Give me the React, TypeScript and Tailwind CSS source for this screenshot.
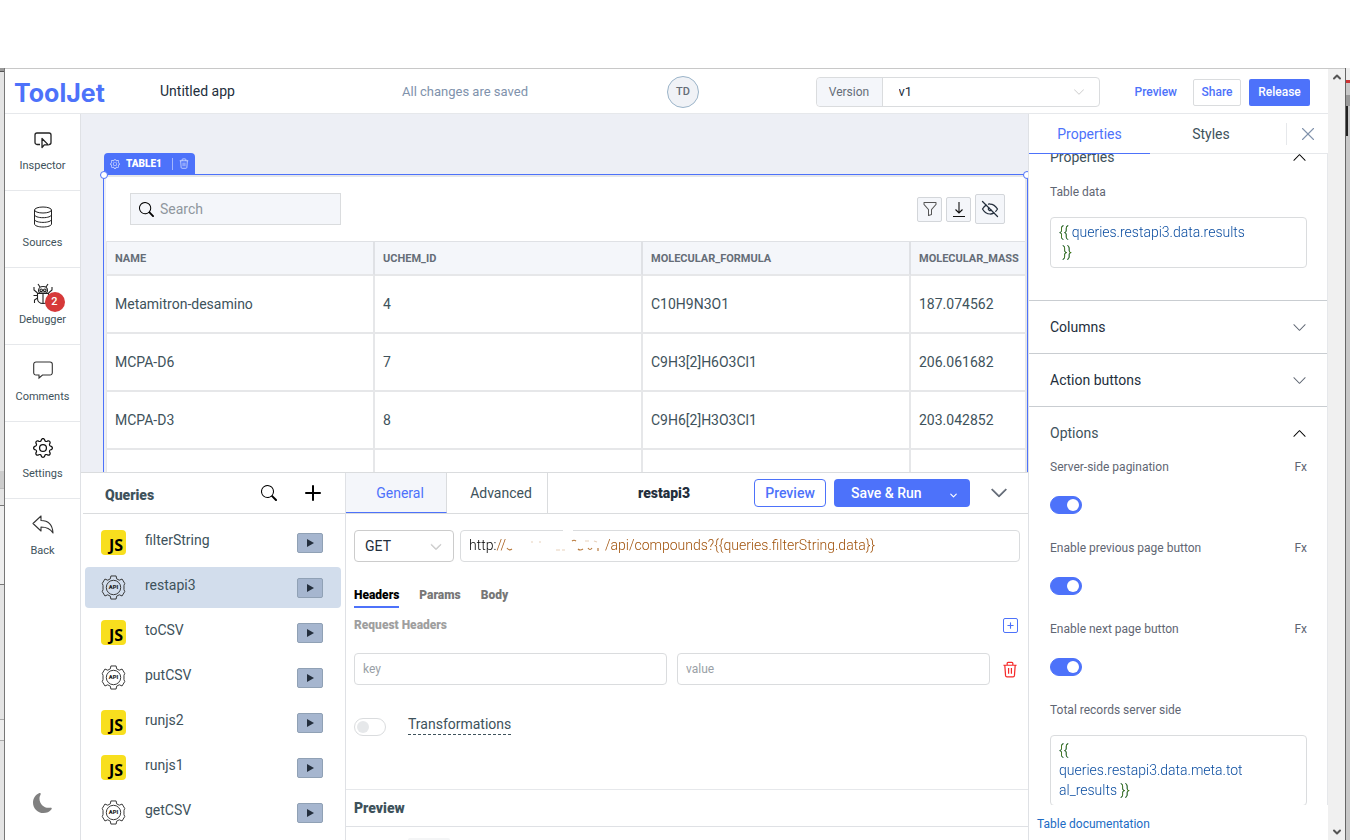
import type { ReactNode } from "react";
import { ChevronDown, ChevronUp, Plus, X } from "lucide-react";
import { BsChevronDown, BsChevronUp, BsFunnel, BsGear, BsMoonFill, BsSearch } from "react-icons/bs";
import { TbEyeOff } from "react-icons/tb";

const URL_VALUE = "http://" + "\u00a0".repeat(29) + "/api/compounds?{{queries.filterString.data}}";

const queries = [
  { name: "filterString", kind: "js" },
  { name: "restapi3", kind: "api" },
  { name: "toCSV", kind: "js" },
  { name: "putCSV", kind: "api" },
  { name: "runjs2", kind: "js" },
  { name: "runjs1", kind: "js" },
  { name: "getCSV", kind: "api" },
];

const columns = ["NAME", "UCHEM_ID", "MOLECULAR_FORMULA", "MOLECULAR_MASS"];

const rows = [
  ["Metamitron-desamino", "4", "C10H9N3O1", "187.074562"],
  ["MCPA-D6", "7", "C9H3[2]H6O3Cl1", "206.061682"],
  ["MCPA-D3", "8", "C9H6[2]H3O3Cl1", "203.042852"],
  ["", "", "", ""],
];

function InspectorIcon() {
  return (
    <svg width="20" height="20" viewBox="0 0 20 20" fill="none" stroke="#222" strokeWidth="1.3">
      <path d="M7 14.5H4A2 2 0 0 1 2 12.5V5a2 2 0 0 1 2-2h12a2 2 0 0 1 2 2v7.500a2 2 0 0 1-2 2" />
      <path d="M9 8.500v9l2.300-2.600h4z" strokeLinejoin="round" />
    </svg>
  );
}

function DatabaseIcon() {
  return (
    <svg width="20" height="22" viewBox="0 0 20 22" fill="none" stroke="#222" strokeWidth="1">
      <ellipse cx="10" cy="4" rx="8.500" ry="3" />
      <path d="M1.500 4v14c0 1.700 3.800 3 8.500 3s8.500-1.300 8.500-3V4" />
      <path d="M1.500 8.700c0 1.700 3.800 3 8.500 3s8.500-1.300 8.500-3M1.500 13.400c0 1.700 3.800 3 8.500 3s8.500-1.300 8.500-3" />
    </svg>
  );
}

function BugIcon() {
  return (
    <svg width="20" height="22" viewBox="0 0 20 22" fill="none" stroke="#222" strokeWidth="1.100">
      <path d="M5 1l2 3M15 1l-2 3M5.500 7.500C5.500 5 7.500 3.500 10 3.500s4.500 1.500 4.500 4c0 1-.5 2-1 2.500h-7c-.5-.5-1-1.500-1-2.500z" />
      <circle cx="8.200" cy="7.300" r="1.300" />
      <circle cx="11.800" cy="7.300" r="1.300" />
      <path d="M4.500 10.500h11v5c0 3-2.300 5-5.500 5s-5.500-2-5.500-5zM10 10.500v10" />
      <path d="M1 4v3l3.500 3M19 4v3l-3.500 3M.5 12.500h4M15.500 12.500h4M1.500 20v-3l3-2M18.500 20v-3l-3-2" />
    </svg>
  );
}

function CommentIcon() {
  return (
    <svg width="20" height="20" viewBox="0 0 20 20" fill="none" stroke="#333" strokeWidth="1.100">
      <path d="M3 1h14a2.300 2.300 0 0 1 2.300 2.300v8.400A2.300 2.300 0 0 1 17 14H9.500L6 17v-3H3A2.300 2.300 0 0 1 .7 11.700V3.300A2.300 2.300 0 0 1 3 1z" />
    </svg>
  );
}

function BackIcon() {
  return (
    <svg width="22" height="20" viewBox="0 0 22 20" fill="none" stroke="#333" strokeWidth="1.100" strokeLinejoin="round">
      <path d="M1 8.500L9 1v4.500c7 0 11.500 4.500 12 12.500-2.500-4-6-6-12-6v4z" />
    </svg>
  );
}

function TrashIcon({ className }: { className?: string }) {
  return (
    <svg className={className} viewBox="0 0 16 18" fill="none" stroke="currentColor" strokeWidth="1.300">
      <path d="M1 4.500h14M5 4.500V2.500A1 1 0 0 1 6 1.500h4a1 1 0 0 1 1 1v2M2.500 4.500l.8 11a1.500 1.500 0 0 0 1.500 1.300h6.400a1.500 1.500 0 0 0 1.500-1.300l.8-11M6.500 7.500v6M9.500 7.500v6" />
    </svg>
  );
}

function ApiIcon() {
  return (
    <svg width="25" height="25" viewBox="0 0 26 26" fill="none" stroke="#333" strokeWidth="1">
      <path
        strokeLinejoin="round"
        d="M10.300 1h5.400l.6 3 2.700 1.400 2.900-1.200 2.800 4.600-.8 2v4.400l.8 2-2.800 4.600-2.900-1.200-2.700 1.400-.6 3h-5.400l-.6-3L7 20.600l-2.900 1.200-2.800-4.600.8-2v-4.400l-.8-2 2.800-4.600L7 5.400 9.700 4z"
      />
      <circle cx="13" cy="13" r="7.500" />
      <text x="13" y="15" textAnchor="middle" fontSize="6" fontWeight="900" fontFamily="Roboto, sans-serif" fill="#222" stroke="none">
        API
      </text>
    </svg>
  );
}

function JsIcon() {
  return (
    <span className="flex h-[25px] w-[25px] items-end justify-end rounded bg-[#f8df1e] pr-[3px] font-['Open_Sans',sans-serif] text-base font-bold leading-5 text-black">
      JS
    </span>
  );
}

function Toggle({ id, on }: { id: string; on?: boolean }) {
  return (
    <input
      id={id}
      type="checkbox"
      defaultChecked={on}
      className="block h-[18px] w-8 shrink-0 appearance-none rounded-full border border-[#dadcde] bg-white before:m-[2px] before:block before:h-3 before:w-3 before:rounded-full before:bg-[#e6e8ea] checked:border-[#4d72fa] checked:bg-[#4d72fa] checked:before:ml-4 checked:before:bg-white"
    />
  );
}

function SideItem({ icon, label, badge }: { icon: ReactNode; label: string; badge?: string }) {
  return (
    <button className="flex h-[77px] w-full flex-col items-center border-b border-[#e6e8eb] pt-[15px] last:border-b-0">
      <span className="relative flex h-[22px] items-center justify-center">
        {icon}
        {badge && (
          <span className="absolute left-3 top-[9px] flex h-5 w-5 items-center justify-center rounded-full bg-[#d63939] text-[11px] font-medium text-white">
            {badge}
          </span>
        )}
      </span>
      <span className="mt-[5px] text-[11px] leading-5 text-[#3e525b]">{label}</span>
    </button>
  );
}

function Header() {
  return (
    <header className="flex h-[45px] shrink-0 items-center border-b border-[#e6e8eb] bg-white pr-[18px] pt-[2px]">
      <a href="#" className="w-[145px] pl-[9px] pt-[2px] font-[Inter,sans-serif] text-[25px] font-bold leading-none text-[#4d72fa]">
        ToolJet
      </a>
      <input
        aria-label="App name"
        defaultValue="Untitled app"
        className="w-[232px] shrink-0 pb-[2px] pl-[10px] text-sm text-[#232e3c] outline-none"
      />
      <span className="pl-5 text-[13px] text-[#8092ac]">All changes are saved</span>
      <span className="ml-[139px] flex h-8 w-8 shrink-0 items-center justify-center rounded-full border border-[#9bb4c9] bg-[#f0f2f6] text-[11px] font-medium text-[#656d77]">
        TD
      </span>
      <div className="ml-auto flex h-[30px] w-[284px] rounded border border-[#dadcde]">
        <label htmlFor="version" className="flex w-[66px] items-center justify-center rounded-l border-r border-[#dadcde] bg-[#f4f6fa] text-xs text-[#656d77]">
          Version
        </label>
        <div className="relative flex-1">
          <select id="version" className="h-full w-full appearance-none bg-transparent pl-4 text-[13px] text-[#232e3c]">
            <option>v1</option>
          </select>
          <BsChevronDown className="pointer-events-none absolute right-[14px] top-2 h-3 w-3 text-[#ccc]" />
        </div>
      </div>
      <a href="#" className="ml-[35px] text-xs font-medium text-[#4d72fa]">Preview</a>
      <button className="ml-4 h-[27px] w-12 rounded-xs border border-[#dadcde] text-xs font-medium text-[#4d72fa]">Share</button>
      <button className="ml-2 h-[27px] w-[61px] rounded-xs bg-[#4d72fa] text-xs font-medium text-white">Release</button>
    </header>
  );
}

function Sidebar() {
  return (
    <nav className="flex w-[76px] shrink-0 flex-col justify-between border-r border-[#dfe1e5] bg-white">
      <div>
        <SideItem icon={<InspectorIcon />} label="Inspector" />
        <SideItem icon={<DatabaseIcon />} label="Sources" />
        <SideItem icon={<BugIcon />} label="Debugger" badge="2" />
        <SideItem icon={<CommentIcon />} label="Comments" />
        <SideItem icon={<BsGear className="h-5 w-5 text-[#111]" />} label="Settings" />
        <SideItem icon={<BackIcon />} label="Back" />
      </div>
      <button aria-label="Dark mode" className="mx-auto mb-[27px]">
        <BsMoonFill className="h-5 w-5 text-[#808080]" />
      </button>
    </nav>
  );
}

function Canvas() {
  return (
    <main className="min-h-0 flex-1 overflow-hidden bg-[#edeff5] pl-[22px] pt-[39px]">
      <div className="ml-px flex h-[21px] w-[91px] items-center rounded-t bg-[#4d72fa] text-white">
        <BsGear className="ml-1.5 h-[10px] w-[10px] opacity-80" />
        <span className="ml-1.5 text-[10px] font-black">TABLE1</span>
        <span className="ml-auto h-3 w-px bg-[#a3b6fc]" />
        <TrashIcon className="mx-1.5 h-[11px] w-[10px] opacity-80" />
      </div>
      <div className="relative border border-[#4d72fa]">
        <span className="absolute -left-1 -top-1 h-2 w-2 rounded-full border border-[#4d72fa] bg-white" />
        <span className="absolute -right-1 -top-1 h-2 w-2 rounded-full border border-[#4d72fa] bg-white" />
        <div className="overflow-hidden border-2 border-[#e6e7e9] border-l-[#edeff5] bg-white">
          <div className="flex h-16 items-center pl-6 pr-5">
            <label className="flex h-8 w-[211px] items-center border border-[#dadcde] bg-[#f4f6fa] pl-2">
              <BsSearch className="h-[15px] w-[15px] text-black" />
              <input type="text" aria-label="Search" placeholder="Search" className="ml-1.5 w-40 text-sm outline-none placeholder:text-[#8f969e]" />
            </label>
            <div className="ml-auto flex items-center gap-1">
              <button aria-label="Filter" className="flex h-[25px] w-[25px] items-center justify-center rounded-xs border border-[#d3d6da] bg-[#f4f6fa]">
                <BsFunnel className="h-4 w-4 text-[#555]" />
              </button>
              <button aria-label="Download" className="flex h-[25px] w-[25px] items-center justify-center rounded-xs border border-[#d3d6da] bg-[#f4f6fa]">
                <svg width="14" height="16" viewBox="0 0 14 16" fill="none" stroke="#111" strokeWidth="1.100">
                  <path d="M7 1v11M3.500 8.500L7 12l3.500-3.500M1 15.500h12" />
                </svg>
              </button>
              <button aria-label="Hide columns" className="flex h-[30px] w-[30px] items-center justify-center rounded-xs border border-[#d3d6da] bg-[#f4f6fa]">
                <TbEyeOff className="h-5 w-5 text-[#232e3c]" strokeWidth={1.5} />
              </button>
            </div>
          </div>
          <table className="w-[1073px] table-fixed border-separate border-spacing-0 border-l border-[#e6e7e9] text-left">
            <thead>
              <tr className="bg-[#f4f6fa]">
                {columns.map((c) => (
                  <th
                    key={c}
                    className="h-[35px] border-b-2 border-r-2 border-t border-b-[#e6e7e9] border-r-[#dfe1e5] border-t-[#dfe1e5] pl-2 pt-[2px] text-[11px] font-bold text-[#656d77]"
                  >
                    {c}
                  </th>
                ))}
              </tr>
            </thead>
            <tbody>
              {rows.map((row, i) => (
                <tr key={i}>
                  {row.map((cell, j) => (
                    <td key={j} className="h-[58px] border-b-2 border-r-2 border-[#e6e7e9] pl-2 text-sm text-[#3e525b]">
                      {cell}
                    </td>
                  ))}
                </tr>
              ))}
            </tbody>
          </table>
        </div>
      </div>
    </main>
  );
}

function QueryList() {
  return (
    <section className="w-[265px] shrink-0 border-r border-[#dfe1e5]">
      <div className="ml-[2px] flex h-[41px] items-center border-b border-[#dadcde] pl-[22px] pr-5">
        <h2 className="mt-1 flex-1 text-sm font-black text-[#3e525b]">Queries</h2>
        <button aria-label="Search queries" className="mr-6">
          <BsSearch className="h-4 w-4 text-black" />
        </button>
        <button aria-label="Add query">
          <Plus className="h-6 w-6 text-black" />
        </button>
      </div>
      <ul className="flex flex-col gap-1 px-1 pt-2">
        {queries.map((q) => (
          <li key={q.name} className={`flex h-[41px] items-center rounded pl-4 pr-[18px] ${q.name === "restapi3" ? "bg-[#d2ddec]" : ""}`}>
            {q.kind === "js" ? <JsIcon /> : <ApiIcon />}
            <button className="mb-1.5 ml-[19px] flex-1 text-left text-sm text-[#3e525b]">{q.name}</button>
            <button aria-label={`Run ${q.name}`} className="flex h-5 w-[26px] items-center justify-center rounded-xs border border-[#90a1b5] bg-[#a6b6cf]">
              <svg width="7" height="8" viewBox="0 0 7 8" fill="#232e3c">
                <path d="M0 0l7 4-7 4z" />
              </svg>
            </button>
          </li>
        ))}
      </ul>
    </section>
  );
}

function QueryEditor() {
  return (
    <section className="flex min-w-0 flex-1 flex-col">
      <div className="flex h-[41px] shrink-0 items-center border-b border-[#dadcde]">
        <button className="h-10 w-[101px] border-b border-r border-b-[#4d72fa] border-r-[#dadcde] bg-[#f4f6fa] pl-2 text-sm text-[#4d72fa]">
          General
        </button>
        <button className="h-10 w-[101px] border-r border-[#dadcde] pl-2 text-sm text-[#3e525b]">Advanced</button>
        <span className="flex-1 pl-[26px] text-center text-sm font-black text-[#232e3c]">restapi3</span>
        <button className="h-7 w-[72px] rounded-sm border border-[#4d72fa] text-sm font-medium text-[#4d72fa]">Preview</button>
        <button className="ml-2 flex h-7 w-[136px] items-center rounded-sm bg-[#4d72fa] pl-[17px] pr-3 text-sm font-medium text-white">
          Save &amp; Run
          <ChevronDown strokeWidth={2.5} className="-mr-px ml-auto mt-1 h-[11px] w-[11px]" />
        </button>
        <button aria-label="Collapse panel" className="ml-5 mr-5">
          <BsChevronDown className="h-[18px] w-[18px] text-[#5f6673]" strokeWidth={0.8} />
        </button>
      </div>

      <div className="flex-1 px-2 pt-4">
        <div className="flex gap-1.5">
          <div className="relative">
            <select aria-label="Method" className="h-8 w-[100px] appearance-none rounded-sm border border-[#ccc] pl-[10px] text-sm text-[#232e3c]">
              <option>GET</option>
            </select>
            <BsChevronDown className="pointer-events-none absolute right-3 top-[11px] h-3 w-3 text-[#ccc]" strokeWidth={1.2} />
          </div>
          <div className="relative flex h-8 flex-1 rounded-sm border border-[#dadcde]">
            <input
              aria-label="URL"
              defaultValue={URL_VALUE}
              className="ml-2 w-full bg-[linear-gradient(90deg,#000_27px,#9c4a00_27px)] bg-clip-text pb-[2px] text-sm font-light text-transparent outline-none"
            />
            <svg className="pointer-events-none absolute left-[45px] top-[6px]" width="98" height="16" viewBox="0 0 98 16" fill="none" stroke="#b97a3c" strokeWidth="1.200">
              <path d="M1 11q2 3 5 1M66 4q2-1.500 4 0M72 12q2 2 5 0M82 11q2 3 4 0M92 11v3" />
              <path d="M25 5h2M33 5h2M50 13h4M56 13h3M79 4h4M88 4l3 1" strokeOpacity=".35" />
            </svg>
            <span className="absolute -top-px left-[102px] h-px w-[10px] bg-white" />
          </div>
        </div>

        <div className="mt-6 flex gap-5 text-xs font-black text-[#777]">
          <button className="h-[22px] border-b-2 border-[#4d72fa] pb-[2px] text-black">Headers</button>
          <button className="h-[22px] pb-1">Params</button>
          <button className="h-[22px] pb-1">Body</button>
        </div>

        <div className="mt-[7px] flex h-5 items-center justify-between pr-[2px]">
          <h3 className="text-xs font-black text-[#9f9f9f]">Request Headers</h3>
          <button aria-label="Add header" className="flex h-[15px] w-[15px] items-center justify-center rounded-xs border border-[#4d72fa]">
            <Plus className="h-[9px] w-[9px] text-[#4d72fa]" strokeWidth={3} />
          </button>
        </div>
        <div className="mt-[18px] flex items-center gap-[10px]">
          <input aria-label="Header key" placeholder="key" className="h-8 min-w-0 flex-1 rounded-sm border border-[#dadcde] pl-2 text-xs placeholder:text-[#9a9fa6]" />
          <input aria-label="Header value" placeholder="value" className="h-8 min-w-0 flex-1 rounded-sm border border-[#dadcde] pl-2 text-xs placeholder:text-[#9a9fa6]" />
          <button aria-label="Delete header" className="w-5 pl-[2px]">
            <TrashIcon className="h-[17px] w-4 text-[#f52828]" />
          </button>
        </div>

        <div className="mt-[29px] flex gap-[22px]">
          <span className="pt-1">
            <Toggle id="transformations" />
          </span>
          <label htmlFor="transformations" className="h-[21px] border-b border-dashed border-[#3e525b] text-sm text-[#3e525b]">
            Transformations
          </label>
        </div>
      </div>

      <div className="h-[51px] shrink-0 border-t border-[#e6e8eb]">
        <h3 className="flex h-[37px] items-center border-b border-[#dfe1e5] pl-2 text-sm font-black text-[#3e525b]">Preview</h3>
        <div className="ml-[62px] mt-[11px] h-1 w-[42px] rounded-sm bg-[#f4f5f6]" />
      </div>
    </section>
  );
}

function Section({ title }: { title: string }) {
  return (
    <button className="flex w-full items-center justify-between border-b border-[#c9cdd1] py-4 pl-[21px] pr-5 text-sm text-[#232e3c]">
      {title}
      <BsChevronDown className="h-[15px] w-[15px] text-[#5f6673]" />
    </button>
  );
}

function Option({ id, label }: { id: string; label: string }) {
  return (
    <div className="h-[81px]">
      <div className="flex h-4 items-center justify-between text-xs text-[#5f6673]">
        <label htmlFor={id}>{label}</label>
        <button>Fx</button>
      </div>
      <div className="mt-[21px]">
        <Toggle id={id} on />
      </div>
    </div>
  );
}

function Properties() {
  return (
    <aside className="flex w-[300px] shrink-0 flex-col overflow-hidden border-l border-[#dfe1e5] bg-white">
      <div className="flex h-10 shrink-0 items-center border-b border-[#e6e8eb] text-sm text-[#3e525b]">
        <button className="-mb-px h-10 w-[121px] border-b border-[#4d72fa] text-[#4d72fa]">Properties</button>
        <button className="h-10 flex-1 pr-[14px]">Styles</button>
        <button aria-label="Close" className="flex h-[22px] w-[42px] items-center justify-center border-l border-[#e6e8eb]">
          <X strokeWidth={1.2} className="h-[22px] w-[22px] text-[#8092ac]" />
        </button>
      </div>
      <div className="min-h-0 flex-1 overflow-hidden border-r border-[#e6e8eb]">
        <div className="-mt-[7px] border-b border-[#c9cdd1] pb-8 pl-[21px] pr-5">
          <div className="flex h-5 items-center justify-between text-sm text-[#3e525b]">
            Properties
            <BsChevronUp className="h-[15px] w-[15px] text-black" />
          </div>
          <label htmlFor="table-data" className="mt-[17px] block text-xs leading-4 text-[#5f6673]">Table data</label>
          <div className="mt-[17px] rounded-sm border border-[#dadcde] px-2 pb-[5px] pt-1">
            <textarea
              id="table-data"
              rows={2}
              defaultValue={"{{ queries.restapi3.data.results\n }}"}
              className="block w-full resize-none overflow-hidden bg-[linear-gradient(#4a7d00,#4a7d00),linear-gradient(#4a7d00,#4a7d00),linear-gradient(#00459c,#00459c)] bg-[length:10px_20px,14px_20px,100%_100%] bg-[position:0_0,0_20px,0_0] bg-no-repeat bg-clip-text text-sm font-light leading-5 text-transparent outline-none"
            />
          </div>
        </div>
        <Section title="Columns" />
        <Section title="Action buttons" />
        <div className="pl-[21px] pr-5 pt-4">
          <div className="mb-4 flex h-5 items-center justify-between text-sm text-[#3e525b]">
            Options
            <BsChevronUp className="h-[15px] w-[15px] text-black" />
          </div>
          <Option id="server-pagination" label="Server-side pagination" />
          <Option id="previous-page" label="Enable previous page button" />
          <Option id="next-page" label="Enable next page button" />
          <label htmlFor="total-records" className="block text-xs leading-4 text-[#5f6673]">Total records server side</label>
          <div className="mt-[17px] rounded-sm border border-[#dadcde] px-2 pb-[5px] pt-1">
            <textarea
              id="total-records"
              rows={3}
              defaultValue={"{{\nqueries.restapi3.data.meta.tot\nal_results }}"}
              className="block w-full resize-none overflow-hidden bg-[linear-gradient(#4a7d00,#4a7d00),linear-gradient(#4a7d00,#4a7d00),linear-gradient(#00459c,#00459c)] bg-[length:10px_20px,14px_20px,100%_100%] bg-[position:0_0,60px_40px,0_0] bg-no-repeat bg-clip-text text-sm font-light leading-5 text-transparent outline-none"
            />
          </div>
        </div>
      </div>
      <div className="h-[35px] shrink-0 pl-2 pt-[11px] text-xs">
        <a href="#" className="text-[#206bc4]">Table documentation</a>
      </div>
    </aside>
  );
}

export default function App() {
  return (
    <div className="flex h-screen flex-col overflow-hidden bg-white pt-[68px] font-[Roboto,sans-serif]">
      <div className="flex min-h-0 flex-1">
        <div className="flex w-[5px] shrink-0 flex-col border-r border-[#777] bg-[#e4e4e4]">
          <div className="h-1 border-b border-[#555] bg-[#999]" />
          <div className="mt-[399px] h-[18px] border-b border-[#bbb] bg-[#ccc]" />
          <div className="mt-4 h-20 border-y border-[#777] bg-[#eee]" />
          <div className="mt-[134px] h-[22px] border-y border-[#aaa] bg-[#eee]" />
        </div>
        <div className="flex min-w-0 flex-1 flex-col border-t border-[#c8c8c8]">
          <Header />
          <div className="flex min-h-0 flex-1">
            <Sidebar />
            <div className="flex min-w-0 flex-1 flex-col">
              <Canvas />
              <div className="flex h-[368px] shrink-0 border-t border-[#dadcde] bg-white">
                <QueryList />
                <QueryEditor />
              </div>
            </div>
            <Properties />
          </div>
        </div>
        <div className="flex w-[17px] shrink-0 flex-col items-center justify-between border-t border-[#c8c8c8] bg-[#f0f0f0] py-[2px] text-[#555]">
          <ChevronUp strokeWidth={4} className="h-3 w-3" />
          <ChevronDown strokeWidth={4} className="h-3 w-3" />
        </div>
        <div className="w-[5px] shrink-0 border-l border-[#666] bg-[#c8c8c8]">
          <div className="h-3 bg-[#eee]" />
          <div className="h-[3px] bg-[#c33]" />
          <div className="mt-3 h-[11px] bg-[#999]" />
          <div className="h-[30px] w-[2px] bg-[#222]" />
        </div>
      </div>
    </div>
  );
}
